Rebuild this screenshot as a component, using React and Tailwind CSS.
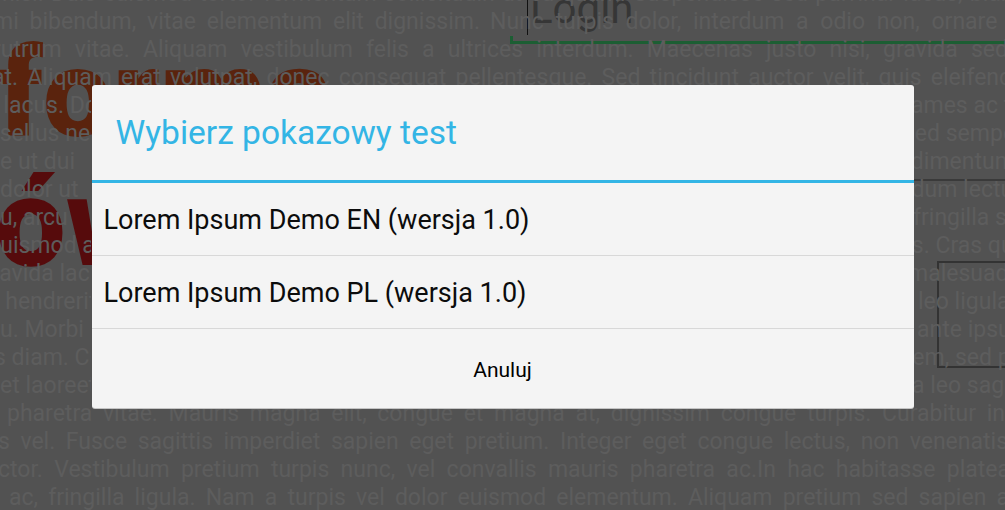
import React from 'react';

// visible page lines are justified, so each gets a start and a width
const fullLines = {
  0: { cls: 'ml-[-30px] w-[1120px]', text: 'ae nisl. Duis euismod tortor fermentum sollicitudin ut eu quam. Suspendisse sed pulvinar lacus, blandit quis' },
  2: { cls: 'ml-[-7px] w-[1015px]', text: 'rutrum vitae. Aliquam vestibulum felis a ultrices interdum. Maecenas justo nisi, gravida sed' },
  3: { cls: 'ml-[-8px] w-[1020px]', text: 'at. Aliquam erat volutpat, donec consequat pellentesque. Sed tincidunt auctor velit, quis eleifend' },
  15: { cls: 'ml-[7px] w-[998px]', text: 'pharetra vitae. Mauris magna elit, congue et magna at, dignissim congue turpis. Curabitur in' },
  16: { cls: 'ml-[-2px] w-[1010px]', text: 's vel. Fusce sagittis imperdiet sapien eget pretium. Integer eget congue lectus, non venenatis' },
  17: { cls: 'ml-[-2px] w-[1012px]', text: 'ctor. Vestibulum pretium turpis nunc, vel convallis mauris pharetra ac.In hac habitasse platea' },
  18: { cls: 'ml-[9px] w-[1000px]', text: 'ac, fringilla ligula. Nam a turpis vel dolor euismod elementum. Aliquam pretium sed sapien a' },
};

// covered lines: only the ends show beside the dialog
const splitLines = [
  { l: 'l lacus. Donec', lml: 'ml-[-8px]', r: 'fames ac turpis', rml: 'ml-[-10px]' },
  { l: 'Phasellus nec', lml: 'ml-[-40px]', r: 'sed semper', rml: 'ml-[-10px]' },
  { l: 'e ut dui', lml: 'ml-[0px]', r: 'condimentum', rml: 'ml-[-40px]' },
  { l: 'dolor ut', lml: 'ml-[0px]', r: 'interdum lectus', rml: 'ml-[-47px]' },
  { l: 'u, arcu', lml: 'ml-[0px]', r: 'fringilla sed', rml: 'ml-[0px]' },
  { l: 'euismod a', lml: 'ml-[-12px]', r: 'lacus. Cras quis', rml: 'ml-[-44px]' },
  { l: 'gravida lacus', lml: 'ml-[-21px]', r: 'malesuada', rml: 'ml-[-5px]' },
  { l: 't hendrerit', lml: 'ml-[-8px]', r: 'leo ligula', rml: 'ml-[5px]' },
  { l: 'u. Morbi', lml: 'ml-[0px]', r: 'ante ipsum', rml: 'ml-[4px]' },
  { l: 's diam. Cum', lml: 'ml-[-6px]', r: 'lorem, sed pretium', rml: 'ml-[-27px]' },
  { l: 'et laoreet', lml: 'ml-[0px]', r: 'a leo sagittis', rml: 'ml-[-1px]' },
];

const justify = 'overflow-hidden text-justify [text-align-last:justify]';

function LoremLayer() {
  const rows = [];
  for (let i = 0; i <= 18; i++) {
    if (i === 1) {
      rows.push(
        <div key={i} className="flex h-[28px] gap-[10px]">
          <div className={`ml-[-7px] w-[487px] shrink-0 ${justify}`}>mi bibendum, vitae elementum elit dignissim.</div>
          <div className={`w-[600px] shrink-0 ${justify}`}>Nunc turpis dolor, interdum a odio non, ornare pulvinar</div>
        </div>
      );
    } else if (fullLines[i]) {
      rows.push(
        <div key={i} className={`h-[28px] ${justify} ${fullLines[i].cls}`}>
          {fullLines[i].text}
        </div>
      );
    } else {
      const s = splitLines[i - 4];
      rows.push(
        <div key={i} className="grid h-[28px] grid-cols-[91px_822px_1fr] whitespace-nowrap">
          <div className="overflow-hidden"><div className={s.lml}>{s.l}</div></div>
          <div />
          <div><div className={s.rml}>{s.r}</div></div>
        </div>
      );
    }
  }
  return (
    <div className="absolute left-0 top-[-20px] w-[1005px] text-[23px] leading-[28px] text-[#5d5d5d]">
      {rows}
    </div>
  );
}

function Dialog() {
  const items = ['Lorem Ipsum Demo EN (wersja 1.0)', 'Lorem Ipsum Demo PL (wersja 1.0)'];
  return (
    <div className="w-[822px] rounded-[3px] bg-[#f4f4f4] shadow-[0_1px_0_#c4c4c4]">
      <div className="flex h-[95px] items-center pl-[24px] pt-[2px] text-[33.5px] text-[#33b5e5]">
        Wybierz pokazowy test
      </div>
      <div className="h-[3px] bg-[#33b5e5]" />
      {items.map(t => (
        <div key={t} className="flex h-[73px] items-center border-b border-[#d8d8d8] pl-[12px] pt-[3px] text-[27px] text-[#0c0c0c]">
          {t}
        </div>
      ))}
      <div className="flex h-[79px] items-center justify-center pt-[4px] text-[21px] text-black">
        Anuluj
      </div>
    </div>
  );
}

export default function App() {
  return (
    <div className="relative h-[510px] w-[1005px] overflow-hidden bg-[#525252] font-['Roboto',sans-serif]">
      {/* dimmed page underneath */}
      <div className="absolute left-[-2px] top-[29px] flex flex-col text-[124px] font-black leading-[129px]">
        <div className="text-[#5a230d]">forma</div>
        <div className="ml-[-2px] text-[#560b0c]">ówna</div>
      </div>

      <div className="absolute left-[510px] top-[-12px] w-[520px]">
        <div className="flex h-[53px] items-start">
          <div className="mt-[12px] ml-[17px] h-[35px] w-px bg-[#111]" />
          <div className="ml-[2px] text-[42px] leading-none text-[#363636]">Login</div>
        </div>
        <div className="mt-[-5px] h-[8px] border-b-[3px] border-l-[3px] border-[#1c5e33]" />
      </div>

      <div className="absolute left-[600px] top-[179px] h-[2px] w-[420px] bg-[#3a3a3a]" />
      <div className="absolute left-[937px] top-[261px] h-[107px] w-[100px] border-2 border-[#333]" />

      <LoremLayer />

      <div className="absolute inset-0 flex items-start justify-center pt-[85px]">
        <Dialog />
      </div>
    </div>
  );
}
